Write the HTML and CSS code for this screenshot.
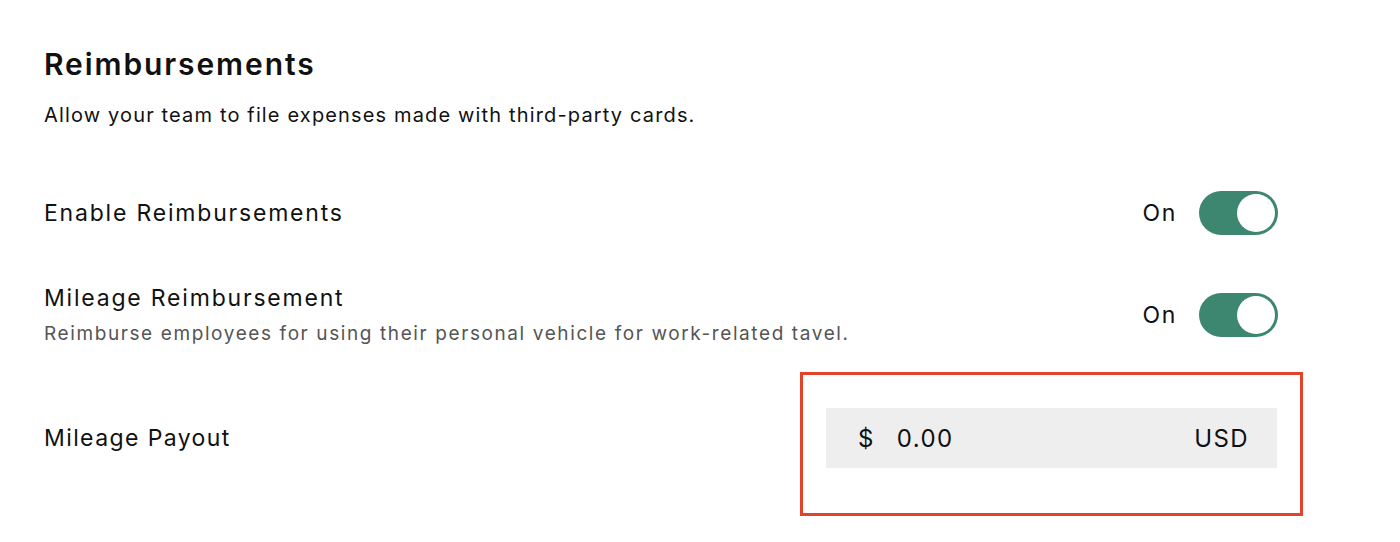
FILE: index.html
```html
<!DOCTYPE html>
<html>
<head>
<meta charset="utf-8">
<link rel="stylesheet" href="styles.css">
</head>
<body>
<main class="page">
  <h1 class="title">Reimbursements</h1>
  <p class="subtitle">Allow your team to file expenses made with third-party cards.</p>

  <div class="row row-enable">
    <div class="label">Enable Reimbursements</div>
    <div class="control">
      <span class="state">On</span>
      <span class="toggle"><span class="knob"></span></span>
    </div>
  </div>

  <div class="row row-mileage">
    <div class="text">
      <div class="label">Mileage Reimbursement</div>
      <div class="desc">Reimburse employees for using their personal vehicle for work-related tavel.</div>
    </div>
    <div class="control">
      <span class="state">On</span>
      <span class="toggle"><span class="knob"></span></span>
    </div>
  </div>

  <div class="row row-payout">
    <div class="label label-payout">Mileage Payout</div>
    <div class="highlight">
      <div class="amount">
        <span class="currency">$</span>
        <span class="value">0.00</span>
        <span class="code">USD</span>
      </div>
    </div>
  </div>
</main>
</body>
</html>
```

FILE: styles.css
```css
* { box-sizing: border-box; }
html, body { margin: 0; padding: 0; background: #ffffff; }
body {
  font-family: Inter, "Noto Sans", sans-serif;
  color: #111111;
  width: 1400px;
  height: 542px;
  overflow: hidden;
}
.page {
  padding: 44px 122px 0 44px;
}
.title {
  margin: 0;
  font-size: 30px;
  font-weight: 600;
  line-height: 40px;
  letter-spacing: 1.9px;
}
.subtitle {
  margin: 17px 0 0 0;
  font-size: 20px;
  line-height: 28px;
  letter-spacing: 1.15px;
}
.row {
  display: flex;
  align-items: center;
  justify-content: space-between;
}
.row-enable { margin-top: 62px; height: 44px; }
.row-mileage { margin-top: 48px; }
.row-payout {
  margin-top: 25px;
  margin-right: -25px;
  align-items: flex-start;
}
.label {
  font-size: 23px;
  line-height: 30px;
  letter-spacing: 1.8px;
}
.label-payout {
  margin-top: 51px;
  letter-spacing: 1.4px;
}
.desc {
  font-size: 19px;
  line-height: 26px;
  color: #555555;
  letter-spacing: 1.6px;
  margin-top: 8px;
}
.control {
  display: flex;
  align-items: center;
  gap: 22px;
}
.state {
  font-size: 23px;
  letter-spacing: 1.7px;
}
.toggle {
  display: flex;
  align-items: center;
  justify-content: flex-end;
  width: 79px;
  height: 44px;
  border-radius: 22px;
  background: #3d8770;
  padding: 3px;
}
.knob {
  width: 38px;
  height: 38px;
  border-radius: 50%;
  background: #ffffff;
}
.highlight {
  width: 503px;
  height: 144px;
  border: 3px solid #e2432b;
  padding: 33px 23px 0 23px;
}
.amount {
  display: flex;
  align-items: center;
  height: 60px;
  background: #eeeeee;
  padding: 0 28px 0 32px;
  font-size: 24px;
  letter-spacing: 1.4px;
}
.value { margin-left: 22px; }
.code { margin-left: auto; }
```
